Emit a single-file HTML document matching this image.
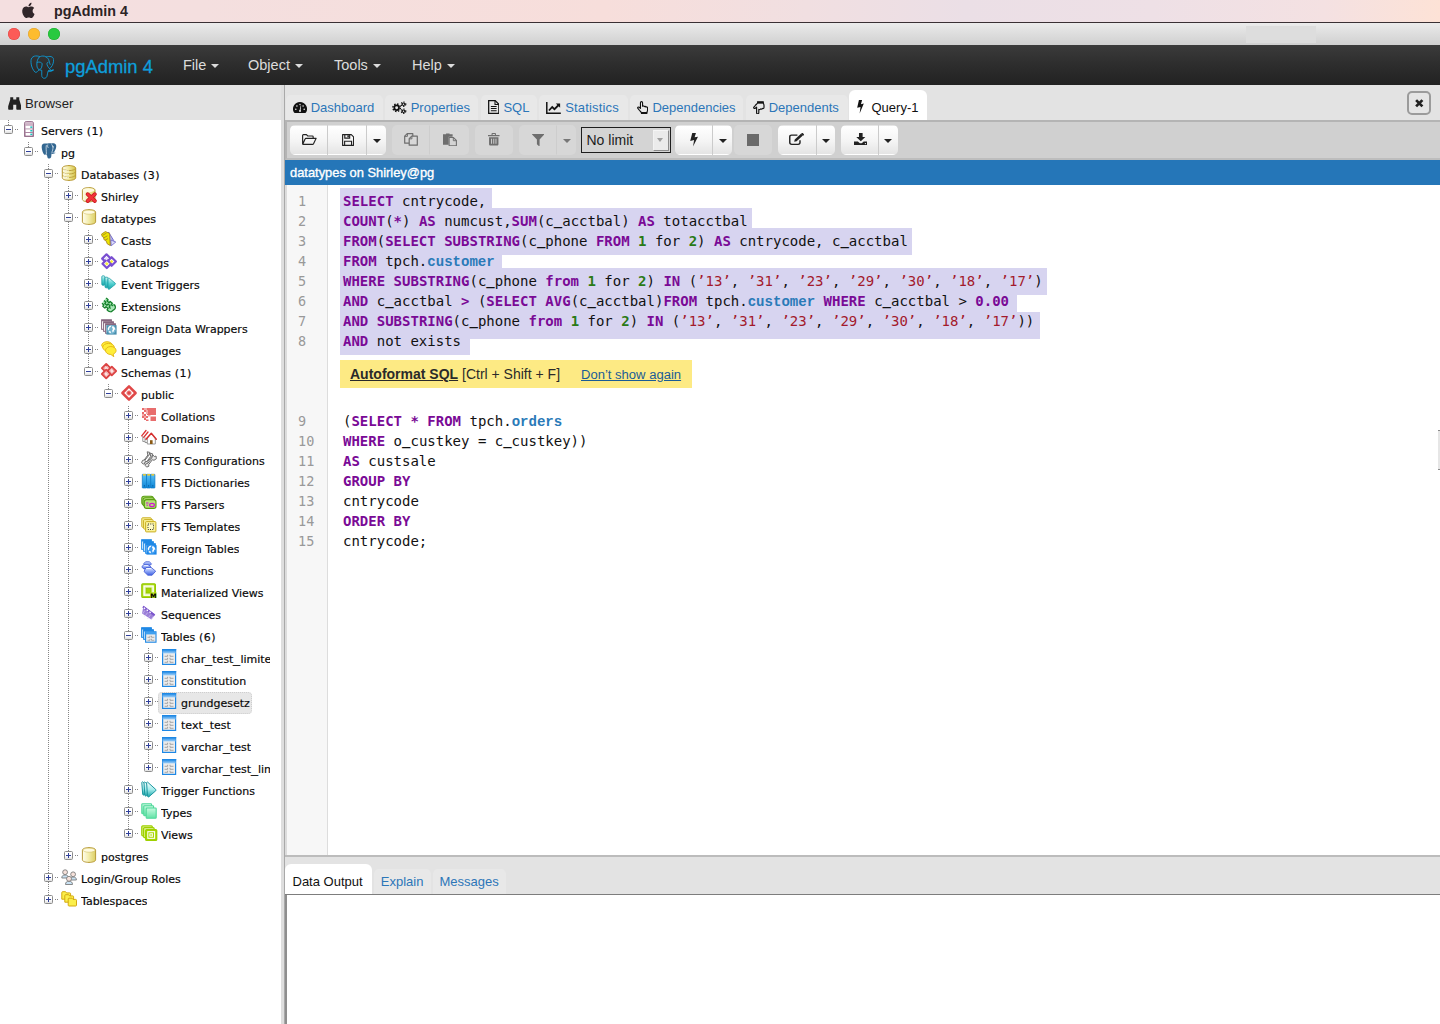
<!DOCTYPE html>
<html lang="en">
<head>
<meta charset="utf-8">
<title>pgAdmin 4</title>
<style>
*{box-sizing:border-box;margin:0;padding:0}
html,body{width:1440px;height:1024px;overflow:hidden;background:#fff}
body{position:relative;font-family:"Liberation Sans",sans-serif;font-size:13px;color:#222}
.abs{position:absolute}
/* ---------- macOS chrome ---------- */
#menubar{left:0;top:0;width:1440px;height:22px;background:linear-gradient(90deg,#f4dfe0 0%,#f4dfdf 14%,#f7dedb 42%,#f1dfe1 56%,#ebdfe6 67%,#eee0e6 80%,#f4e1e2 92%,#fde2d6 100%)}
#menubar .apple{left:21px;top:2px;width:14px;height:17px}
#menubar .app{left:54px;top:2px;font-weight:bold;font-size:14.3px;line-height:18px;color:#2b2326;letter-spacing:0}
#menuline{left:0;top:22px;width:1440px;height:1px;background:#3a3034}
#titlebar{left:0;top:23px;width:1440px;height:22px;background:linear-gradient(180deg,#ececec 0%,#e0e0e0 40%,#d0d0d0 100%)}
#titlebar i{position:absolute;top:5px;width:12px;height:12px;border-radius:50%}
#titlebar .ghost{left:1245.800px;top:3px;width:70.200px;height:17.300px;background:#dddddd}
/* ---------- navbar ---------- */
#navbar{left:0;top:45px;width:1440px;height:40px;background:linear-gradient(180deg,#3b3b3b 0%,#2d2d2d 50%,#222 100%)}
#navbar .brand{left:65px;top:11px;font-size:18.400px;line-height:22px;color:#0e9fdb;-webkit-text-stroke:.3px #0e9fdb;white-space:nowrap}
#navbar .mi{top:11px;font-size:14.500px;line-height:18px;color:#dcdcdc;white-space:nowrap}
#navbar .mi b{display:inline-block;width:0;height:0;border-left:4px solid transparent;border-right:4px solid transparent;border-top:4px solid #dcdcdc;margin-left:5px;vertical-align:2px}
/* ---------- panels ---------- */
#left-head{left:0;top:85px;width:281px;height:35px;background:#e3e3e3}
#left-head .t{left:25px;top:10px;font-size:13.200px;line-height:18px;color:#222}
#tree{left:0;top:120px;width:281px;height:904px;background:#fff;overflow:hidden}
#vsplit{left:281px;top:85px;width:4px;height:939px;background:#dedede}
#vline{left:284px;top:85px;width:1px;height:939px;background:#a9a9a9}
#right-head{left:285px;top:85px;width:1155px;height:35px;background:#e3e3e3}

/* ---------- tabs ---------- */
.tab{position:absolute;top:10px;height:25px;border-radius:5px 5px 0 0;background:#e8e8e8}
.tab.act{top:5px;height:30px;background:#fff;border-radius:6px 6px 0 0}
#right-head svg.ti{position:absolute}
#right-head .tt{position:absolute;top:15px;font-size:13px;line-height:16px;color:#2c76b8;white-space:nowrap}
#right-head .tt.act{color:#111}
#closebtn{left:1122.300px;top:6.300px;width:23.300px;height:23.400px;border:2px solid #9b9b9b;border-radius:5px;background:#e5e5e5}
/* ---------- toolbar ---------- */
#toolbar{left:285px;top:120px;width:1155px;height:40px;background:#d0d0d0;border-top:2px solid #b4b4b4;border-bottom:2px solid #bdbdbd;border-left:2px solid #b4b4b4}
.btn{position:absolute;top:3px;height:30px;background:linear-gradient(180deg,#fff 0%,#f4f4f4 55%,#e4e4e4 100%);border:1px solid transparent}
.btn.dis{background:#d7d7d7}
.btn.l{border-radius:5px 0 0 5px;border-right-color:#cbcbcb}
.btn.r{border-radius:0 5px 5px 0}
.btn.m{border-right-color:#cbcbcb}
.btn.s{border-radius:5px}
.btn.l.dis{border-right-color:#cdcdcd}
.btn svg{position:absolute}
.caret{position:absolute;left:50%;top:13px;margin-left:-4px;width:0;height:0;border-left:4px solid transparent;border-right:4px solid transparent;border-top:4px solid #222}
.dis .caret{border-top-color:#777}
#limit{left:294px;top:5px;width:90px;height:25.800px;border:1px solid #1e1e1e;background:#d4d4d4;font-size:14px;line-height:24px;padding-left:4.500px;color:#1c1c1c}
#limit i{position:absolute;right:1.300px;top:1.500px;width:16px;height:21.500px;border:1.500px solid;border-color:#f6f6f6 #8c8c8c #8c8c8c #f2f2f2;background:#ebebeb}
#limit i:after{content:"";position:absolute;left:3px;top:7.800px;border-left:3.800px solid transparent;border-right:3.800px solid transparent;border-top:4.200px solid #a0a0a0}
#bluebar{left:285px;top:160px;width:1155px;height:25px;background:#2576b8;color:#fff;font-size:12.900px;line-height:25px;padding-left:5px;-webkit-text-stroke:.35px #fff;white-space:nowrap}

/* ---------- tree ---------- */
#tree{font-family:"DejaVu Sans","Liberation Sans",sans-serif;font-size:11px;color:#0a0a0a;-webkit-text-stroke:.18px #0a0a0a}
#tree .clip{position:absolute;left:0;top:0;width:270px;height:904px;overflow:hidden}
#tree u.vl{position:absolute;width:1px;text-decoration:none;background:repeating-linear-gradient(180deg,#858585 0,#858585 1px,transparent 1px,transparent 2px)}
#tree u.hl{position:absolute;width:5px;height:1px;text-decoration:none;background:repeating-linear-gradient(90deg,transparent 0,transparent 1px,#858585 1px,#858585 2px)}
#tree b.tg{position:absolute;width:9px;height:9px;border:1px solid #8c8c8c;border-radius:1.500px;background:linear-gradient(180deg,#fff 0%,#fff 55%,#dedede 100%)}
#tree b.tg:before{content:"";position:absolute;left:1px;top:3px;width:5px;height:1px;background:#2f3f9a}
#tree b.tg.cl:after{content:"";position:absolute;left:3px;top:1px;width:1px;height:5px;background:#2f3f9a}
#tree svg.ic{position:absolute;width:16px;height:16px;overflow:visible}
#tree .lb{position:absolute;line-height:22px;height:22px;white-space:nowrap;letter-spacing:0;overflow:hidden}
#tree .lb s{text-decoration:none;display:inline-block;width:7px;transform:scaleX(1.270);transform-origin:0 50%}
#tree .lb em{font-style:normal;letter-spacing:.4px}
#tree i.sel{position:absolute;width:94px;height:22px;background:#e7e7e7;border:1px dotted #cecece;border-radius:4px}
/* ---------- editor ---------- */
#editor{left:285px;top:185px;width:1155px;height:670px;background:#fff;border-left:2px solid #dcdcdc;overflow:hidden}
#editor .gut{left:0;top:0;width:41px;height:670px;background:#f7f7f7;border-right:1px solid #ddd}
#editor .ln{left:11px;width:30px;height:20px;line-height:20px;font-family:"DejaVu Sans Mono","Liberation Mono",monospace;font-size:13.500px;color:#999}
#editor .cl{left:56px;height:20px;line-height:20px;font-family:"DejaVu Sans Mono","Liberation Mono",monospace;font-size:14px;color:#111;white-space:pre}
#editor .cl u{text-decoration:none;font-weight:bold;position:relative;top:-.6px}
#editor .cl b.k{color:#7a0a96;font-weight:bold}
#editor .cl b.n{color:#2a7a16;font-weight:bold}
#editor .cl i.s{color:#a31a2c;font-style:normal}
#editor .cl b.v{color:#2a7ab8;font-weight:bold;font-family:"Liberation Mono","DejaVu Sans Mono",monospace;font-size:14.050px}
#editor .selbg{left:53px;background:#d7d4f0}
#editor .hint{left:53px;top:175.300px;width:352px;height:27.500px;background:#fdea84;font-size:14px;line-height:28.500px;color:#2a2a2a;white-space:nowrap}
#editor .hint span{position:absolute;top:0}
#editor .hint .h1{left:10px;font-weight:bold;text-decoration:underline}
#editor .hint .h2{left:122px}
#editor .hint .h3{left:241px;top:.8px;color:#1a5c96;text-decoration:underline;font-size:13.050px}
/* ---------- bottom ---------- */
#hsplit{left:285px;top:855px;width:1155px;height:5px;background:#e3e3e3;border-top:2px solid #bcbcbc}
#bot-head{left:285px;top:860px;width:1155px;height:35.200px;background:#e3e3e3;border-bottom:1.400px solid #7d7d7d}
.btab{position:absolute;top:9px;height:25px;border-radius:5px 5px 0 0;background:#e8e8e8}
.btab.act{top:4.200px;height:29.800px;background:#fff;border-radius:6px 6px 0 0}
#bot-head .bt{position:absolute;top:14px;font-size:13px;line-height:16px;color:#2c76b8;white-space:nowrap}
#bot-head .bt.act{color:#111}
#bot-body{left:285px;top:895px;width:1155px;height:129px;background:#fff;border-left:2px solid #8e8e8e}
</style>
</head>
<body>
<!-- macOS menu bar -->
<div id="menubar" class="abs">
  <svg class="abs apple" viewBox="0 0 14 17"><path fill="#30262a" d="M11.6 9c0-1.9 1.6-2.8 1.6-2.9-.9-1.3-2.300-1.500-2.800-1.500-1.200-.1-2.300.7-2.900.7s-1.500-.7-2.500-.7C3.700 4.600 2.500 5.400 1.800 6.500.5 8.800 1.500 12.200 2.800 14.100c.6.900 1.400 1.900 2.400 1.900 1 0 1.300-.6 2.500-.6s1.500.6 2.500.6 1.700-.900 2.300-1.800c.7-1.100 1-2.100 1-2.200 0 0-1.900-.7-1.900-3zM9.700 3.200C10.200 2.600 10.600 1.700 10.500.8 9.700.8 8.800 1.300 8.300 1.900c-.5.600-.9 1.500-.8 2.300.9.100 1.700-.4 2.200-1z"/></svg>
  <div class="abs app">pgAdmin 4</div>
</div>
<div id="menuline" class="abs"></div>
<div id="titlebar" class="abs">
  <i style="left:8px;background:#fc5b57;box-shadow:inset 0 0 0 .5px #df4744"></i>
  <i style="left:28px;background:#fdbc2e;box-shadow:inset 0 0 0 .5px #de9f34"></i>
  <i style="left:48px;background:#28c93f;box-shadow:inset 0 0 0 .5px #1dad2b"></i>
  <div class="abs ghost"></div>
</div>
<!-- pgAdmin navbar -->
<div id="navbar" class="abs">
  <svg class="abs" style="left:29.700px;top:9.600px;width:24.700px;height:24.500px" viewBox="-.5 -.5 25 24.500" fill="none" stroke="#0c9bd6" stroke-width=".9" stroke-linecap="round" stroke-linejoin="round">
    <path d="M9.300 1C7.800.300 5.600.100 4 .500 1.800 1.200.600 2.800.500 5c-.1 3 .500 6 1.800 8.400.700 1.300 1.500 2.600 2.400 3.300.900.600 1.900-.100 2.500-.900.600-.700 1.300-1.300 1.800-1.800"/>
    <path d="M8.300 2.100C9.300 1 10.800.400 12.500.400c1.300 0 2.500.300 3.500 1 1.500 1 2.500 2.300 2.800 4 .300 1.300.700 2.400 1.100 3.500"/>
    <path d="M8.300 2.100C7.300 3.700 6.600 5.500 6.500 7.400c-.1 1.500-.1 2.900.2 4.200.300 1.300 1.100 2.300 2.300 2.800.800.300 1.600.400 2.400.400v5.200c0 1.800 1.100 2.900 2.500 2.900 1.500 0 2.500-.900 2.800-2.100.400-1.500.500-3.300 1.100-4.900.200-.500.400-.700.700-.800"/>
    <path d="M6.900 6.700c1-.300 2.200-.300 3.100 0 1.100.400 1.800 1 1.800 1.700 0 1.300-.300 2.700-.700 3.900-.300.800-.800 1.300-1.400 1.700"/>
    <path d="M16 1.400c1.500-.600 3.300-.800 4.900-.400 1.500.400 2.400 1.500 2.500 2.900.1 1.600-.200 3.100-.700 4.500-.400 1.200-1 2.300-1.800 3.200-.500.700-1.100 1.300-1.700 1.800"/>
    <path d="M17.800 6.700c-.600.100-1.100.500-1.100 1.100-.1.500 0 .9.100 1.300.300 1.200 1 2.300 1.700 3.200.500.600 1.100 1.200 1.700 1.700"/>
    <path d="M18.500 15.500c.900.200 1.800.100 2.600-.200.700-.200 1.400-.500 1.900-.900" stroke-width="1.400"/>
  </svg>
  <div class="abs brand">pgAdmin 4</div>
  <div class="abs mi" style="left:183px">File<b></b></div>
  <div class="abs mi" style="left:248px">Object<b></b></div>
  <div class="abs mi" style="left:334px">Tools<b></b></div>
  <div class="abs mi" style="left:412px">Help<b></b></div>
</div>
<!-- browser panel -->
<div id="left-head" class="abs">
  <svg class="abs" style="left:7.500px;top:12px;width:13.500px;height:13px" viewBox="0 0 15 14"><path fill="#222" d="M2.500 0h3.300v2.500h3.400V0h3.300v2.500l2.300 7.500v3.200c0 .4-.3.800-.8.800h-4c-.4 0-.8-.4-.8-.8V8.500H5.800v4.700c0 .4-.4.800-.8.800H1c-.5 0-.8-.4-.8-.8V10L2.500 2.500z"/></svg>
  <div class="abs t">Browser</div>
</div>
<div id="tree" class="abs"><svg width="0" height="0" style="position:absolute"><defs><linearGradient id="gsv" x1="0" y1="0" x2="0" y2="1"><stop offset="0" stop-color="#d9c2d2"/><stop offset="1" stop-color="#9c7190"/></linearGradient><linearGradient id="gdb" x1="0" y1="0" x2="1" y2="0"><stop offset="0" stop-color="#fffdf0"/><stop offset=".5" stop-color="#f2e99a"/><stop offset="1" stop-color="#d3c24a"/></linearGradient><linearGradient id="gcy" x1="0" y1="0" x2="1" y2="0"><stop offset="0" stop-color="#fffdf0"/><stop offset=".45" stop-color="#f4eeb0"/><stop offset="1" stop-color="#dccf63"/></linearGradient><linearGradient id="gev" x1="0" y1="0" x2="0" y2="1"><stop offset="0" stop-color="#d8f7f7"/><stop offset=".5" stop-color="#52d0d0"/><stop offset="1" stop-color="#17a5a8"/></linearGradient><linearGradient id="gbk" x1="0" y1="0" x2="0" y2="1"><stop offset="0" stop-color="#5cc1f5"/><stop offset="1" stop-color="#0b86d8"/></linearGradient><linearGradient id="gfn" x1="0" y1="0" x2="0" y2="1"><stop offset="0" stop-color="#e6ecff"/><stop offset=".5" stop-color="#8ea6f6"/><stop offset="1" stop-color="#3f5fe0"/></linearGradient><linearGradient id="gtb" x1="0" y1="0" x2="0" y2="1"><stop offset="0" stop-color="#1e88e5"/><stop offset="1" stop-color="#9fd0f8"/></linearGradient><linearGradient id="gtf" x1="0" y1="0" x2="0" y2="1"><stop offset="0" stop-color="#fff"/><stop offset=".5" stop-color="#a5ecec"/><stop offset="1" stop-color="#18a3a8"/></linearGradient><linearGradient id="gty" x1="0" y1="0" x2="0" y2="1"><stop offset="0" stop-color="#c8fae0"/><stop offset="1" stop-color="#62e2a6"/></linearGradient></defs></svg>
<u class="vl" style="left:8px;top:0px;height:5px"></u><u class="hl" style="left:14px;top:9px"></u><b class="tg op" style="left:4px;top:5px"></b><svg class="ic" style="left:21px;top:1px" viewBox="0 0 16 16"><path d="M3.500 2.200C3.500 1.200 4.300.500 5.200.500h5.600c.900 0 1.700.700 1.700 1.700V15.500h-9z" fill="url(#gsv)" stroke="#8a5f7f" stroke-width=".8"/><g fill="#fff"><rect x="4.600" y="4.800" width="6.800" height="2.600"/><rect x="4.600" y="8.400" width="6.800" height="2.600"/><rect x="4.600" y="12" width="6.800" height="2.600"/></g><g fill="#19c3c0"><rect x="9.300" y="5.400" width="2" height="1.500"/><rect x="9.300" y="9" width="2" height="1.500"/><rect x="9.300" y="12.600" width="2" height="1.500"/></g></svg><span class="lb" style="left:41px;top:1px;max-width:229px">Servers<em> (1)</em></span>
<u class="vl" style="left:28px;top:22px;height:5px"></u><u class="hl" style="left:34px;top:31px"></u><b class="tg op" style="left:24px;top:27px"></b><svg class="ic" style="left:41px;top:23px" viewBox="0 0 16 16"><path fill="#336791" d="M3.700.600C1.700.500.500 2 .700 4.400c.2 2.600 1.200 5.600 2.400 7 .700.800 1.700.500 2.100-.300.100.900.500 1.400 1 1.600 0 1.300.300 2.600 1.600 2.800 1.700.300 2.400-.900 2.500-2.500l.200-2.300c.700.300 1.500.300 2.300.100.900-.200 1.700-.700 1.500-1-.200-.400-.900-.050-1.600-.100 1.700-2 3.100-5.800 2.400-7.600C14.400.300 12.200-.100 10.400.600 9.300.100 7.900.100 6.800.600 5.900.400 4.700.600 3.700.600z"/><path fill="none" stroke="#e3ebf3" stroke-width=".75" stroke-linecap="round" d="M5.300 2.500c-.500 2.300.100 5 .100 8.300M6.700 1.900c-.300 1-.200 1.900.400 2.700M10.800 1.600c1.100 1.500 1.400 3.700.900 5.500-.300 1-.900 1.800-.800 2.900M11.900 3c.500.200.800.600.700 1.100M12.700 9.900c.600.100 1.300.050 1.800-.200"/></svg><span class="lb" style="left:61px;top:23px;max-width:209px">pg</span>
<u class="vl" style="left:48px;top:44px;height:5px"></u><u class="vl" style="left:48px;top:58px;height:8px"></u><u class="hl" style="left:54px;top:53px"></u><b class="tg op" style="left:44px;top:49px"></b><svg class="ic" style="left:61px;top:45px" viewBox="0 0 16 16"><path d="M1.300 3.200C1.300 1.700 4.300.600 8 .600s6.700 1.100 6.700 2.600v9.600c0 1.500-3 2.600-6.700 2.600s-6.700-1.100-6.700-2.600z" fill="url(#gdb)" stroke="#b6952c" stroke-width="1"/><path d="M1.500 3.400c.5 1.300 3.300 2.200 6.500 2.200s6-.9 6.500-2.200M1.500 6.800c.5 1.300 3.300 2.200 6.500 2.200s6-.9 6.500-2.200M1.500 10.200c.5 1.300 3.300 2.200 6.500 2.200s6-.9 6.500-2.200" fill="none" stroke="#b89c35" stroke-width=".9"/><path d="M2.500 4.600c1 .9 3.200 1.400 5.500 1.400M2.500 8c1 .9 3.200 1.400 5.500 1.400M2.500 11.400c1 .9 3.200 1.400 5.500 1.400" fill="none" stroke="#fffef2" stroke-width=".9"/></svg><span class="lb" style="left:81px;top:45px;max-width:189px">Databases<em> (3)</em></span>
<u class="vl" style="left:48px;top:66px;height:22px"></u><u class="vl" style="left:68px;top:66px;height:5px"></u><u class="vl" style="left:68px;top:80px;height:8px"></u><u class="hl" style="left:74px;top:75px"></u><b class="tg cl" style="left:64px;top:71px"></b><svg class="ic" style="left:81px;top:67px" viewBox="0 0 16 16"><path d="M1.400 3.100C1.400 1.700 4.200.600 7.700.600S14 1.700 14 3.100v9.300c0 1.400-2.800 2.500-6.300 2.500s-6.300-1.100-6.300-2.500z" fill="url(#gcy)" stroke="#b89a3a" stroke-width="1"/><ellipse cx="7.700" cy="3.200" rx="5.700" ry="2" fill="#fffbe0"/><path d="M6.600 7.200l7.300 6.800M13.900 7.200L6.600 14" stroke="#c4141b" stroke-width="3.800" stroke-linecap="round"/><path d="M6.600 7.200l7.300 6.800M13.900 7.200L6.600 14" stroke="#f3333a" stroke-width="2.400" stroke-linecap="round"/></svg><span class="lb" style="left:101px;top:67px;max-width:169px">Shirley</span>
<u class="vl" style="left:48px;top:88px;height:22px"></u><u class="vl" style="left:68px;top:88px;height:5px"></u><u class="vl" style="left:68px;top:102px;height:8px"></u><u class="hl" style="left:74px;top:97px"></u><b class="tg op" style="left:64px;top:93px"></b><svg class="ic" style="left:81px;top:89px" viewBox="0 0 16 16"><path d="M1.400 3.100C1.400 1.700 4.300.600 8 .600s6.600 1.100 6.600 2.500v9.800c0 1.400-2.900 2.500-6.600 2.500s-6.600-1.100-6.600-2.500z" fill="url(#gcy)" stroke="#b89a3a" stroke-width="1"/><ellipse cx="8" cy="3.200" rx="6" ry="2" fill="#fffbe0" stroke="#cdb95e" stroke-width=".5"/></svg><span class="lb" style="left:101px;top:89px;max-width:169px">datatypes</span>
<u class="vl" style="left:48px;top:110px;height:22px"></u><u class="vl" style="left:68px;top:110px;height:22px"></u><u class="vl" style="left:88px;top:110px;height:5px"></u><u class="vl" style="left:88px;top:124px;height:8px"></u><u class="hl" style="left:94px;top:119px"></u><b class="tg cl" style="left:84px;top:115px"></b><svg class="ic" style="left:101px;top:111px" viewBox="0 0 16 16"><path d="M7.500 1l5.200 8.500-3.200 5z" fill="#b4b4f2" stroke="#6a62c8" stroke-width=".9" stroke-linejoin="round"/><path d="M9.800 9l5 2-4.600 3.800z" fill="#dadafa" stroke="#6a62c8" stroke-width=".8" stroke-linejoin="round"/><path d="M.6 3L4.400.6l4.200 1.800.6 12-2.800-1.400-1.500-3.500-1.800-.7-.7-2.700-1.300-.6z" fill="#ece500" stroke="#a98a22" stroke-width=".9" stroke-linejoin="round"/><path d="M1.600 4.300l3.900-2.200M2.900 6.800l3.600-2M4 9.200l3-1.600" stroke="#a98a22" stroke-width=".9"/></svg><span class="lb" style="left:121px;top:111px;max-width:149px">Casts</span>
<u class="vl" style="left:48px;top:132px;height:22px"></u><u class="vl" style="left:68px;top:132px;height:22px"></u><u class="vl" style="left:88px;top:132px;height:5px"></u><u class="vl" style="left:88px;top:146px;height:8px"></u><u class="hl" style="left:94px;top:141px"></u><b class="tg cl" style="left:84px;top:137px"></b><svg class="ic" style="left:101px;top:133px" viewBox="0 0 16 16"><g stroke="#7a4fd1" stroke-width="2.200" fill="#fff" stroke-linejoin="round"><path d="M5.500 1.300l4.300 4.300-4.300 4.300L1.200 5.600z"/><path d="M10.600 4.200l4.300 4.300-4.300 4.300-4.300-4.300z"/><path d="M5.800 7.200l4.300 4.300-4.300 4.300-4.300-4.300z" transform="translate(0,-.8)"/></g><g fill="#f4ee3a"><path d="M10.600 6.700l1.800 1.800-1.800 1.800-1.800-1.800z"/><path d="M5.800 8.900l1.800 1.800-1.800 1.800L4 10.700z"/></g><path d="M5.500 3.800l1.800 1.800-1.800 1.800-1.800-1.800z" fill="#e9e1fb"/></svg><span class="lb" style="left:121px;top:133px;max-width:149px">Catalogs</span>
<u class="vl" style="left:48px;top:154px;height:22px"></u><u class="vl" style="left:68px;top:154px;height:22px"></u><u class="vl" style="left:88px;top:154px;height:5px"></u><u class="vl" style="left:88px;top:168px;height:8px"></u><u class="hl" style="left:94px;top:163px"></u><b class="tg cl" style="left:84px;top:159px"></b><svg class="ic" style="left:101px;top:155px" viewBox="0 0 16 16"><g fill="url(#gev)" stroke="#1b9fa6" stroke-width=".8" stroke-linejoin="round"><rect x=".8" y=".8" width="3" height="9.500" rx="1"/><rect x="4" y="2.200" width="3" height="10.600" rx="1"/><path d="M7 4.200c0-1 .8-1.300 1.500-.8l5.600 4.700c.5.400.5 1 0 1.400l-5.600 4.600c-.7.500-1.500.2-1.500-.8z"/></g></svg><span class="lb" style="left:121px;top:155px;max-width:149px">Event Triggers</span>
<u class="vl" style="left:48px;top:176px;height:22px"></u><u class="vl" style="left:68px;top:176px;height:22px"></u><u class="vl" style="left:88px;top:176px;height:5px"></u><u class="vl" style="left:88px;top:190px;height:8px"></u><u class="hl" style="left:94px;top:185px"></u><b class="tg cl" style="left:84px;top:181px"></b><svg class="ic" style="left:101px;top:177px" viewBox="0 0 16 16"><path d="M5 .8l9.800 8.200-4.800 6.200L.8 6.500z" fill="#a9e6b6"/><g fill="none" stroke="#14802a" stroke-width="1.300" stroke-linejoin="round"><path d="M5.200 1l1.900 1.700-1.100 1.300 2.100 1.800 1.100-1.300 2.100 1.800-1.100 1.300 1.600 1.400"/><path d="M3 3.500l1.900 1.700-1.100 1.300 2.100 1.800 1.100-1.300 2.100 1.800-1.100 1.300 1.600 1.400"/><path d="M1 6.200l1.900 1.700-1.100 1.300L3.900 11l1.100-1.300 2.100 1.800L6 12.800l1.600 1.400 2.300.8"/><path d="M12.500 7.500c2.300.6 2.700 4.200.2 5.300l-2.700 2.200"/></g></svg><span class="lb" style="left:121px;top:177px;max-width:149px">Extensions</span>
<u class="vl" style="left:48px;top:198px;height:22px"></u><u class="vl" style="left:68px;top:198px;height:22px"></u><u class="vl" style="left:88px;top:198px;height:5px"></u><u class="vl" style="left:88px;top:212px;height:8px"></u><u class="hl" style="left:94px;top:207px"></u><b class="tg cl" style="left:84px;top:203px"></b><svg class="ic" style="left:101px;top:199px" viewBox="0 0 16 16"><g fill="#fff" stroke="#86667f" stroke-width="1"><rect x=".6" y=".8" width="9.800" height="9.500"/><rect x="2.600" y="2.800" width="9.800" height="9.500"/><rect x="4.600" y="4.800" width="9.800" height="9.500"/></g><path d="M.6 1.500h9.800M2.600 3.500h9.800M4.600 5.500h9.800" stroke="#86667f" stroke-width="1.600"/><rect x="5.400" y="6.200" width="10.200" height="9.400" fill="#4a8fae"/><circle cx="10.500" cy="10.600" r="4.400" fill="#74b4d0"/><path d="M6.800 9.300c.5-1.900 2-2.900 3.600-2.900l-.6 1.500-1.400.8-.3 1.800-1 1zM11.500 6.900c1.600.5 2.700 1.900 2.800 3.700l-1.100.2-.5 1.800-1.200.9-.3-2.100.8-1.400-1-1.300zM8.700 11.900l1 .5.200 1.800c-.9-.1-1.800-.6-2.300-1.400z" fill="#fff"/></svg><span class="lb" style="left:121px;top:199px;max-width:149px">Foreign Data Wrappers</span>
<u class="vl" style="left:48px;top:220px;height:22px"></u><u class="vl" style="left:68px;top:220px;height:22px"></u><u class="vl" style="left:88px;top:220px;height:5px"></u><u class="vl" style="left:88px;top:234px;height:8px"></u><u class="hl" style="left:94px;top:229px"></u><b class="tg cl" style="left:84px;top:225px"></b><svg class="ic" style="left:101px;top:221px" viewBox="0 0 16 16"><g fill="#ffee38" stroke="#e2b315" stroke-width=".9"><ellipse cx="6" cy="4.200" rx="5.300" ry="3.500"/><ellipse cx="7.500" cy="6.300" rx="5.800" ry="3.900"/><path d="M9.800 5.500c3 0 5.300 1.800 5.300 4 0 1.600-1.200 2.900-2.900 3.600l.6 2.600-2.900-2.200C6.800 13.500 4.500 11.700 4.500 9.500c0-2.200 2.300-4 5.300-4z"/></g></svg><span class="lb" style="left:121px;top:221px;max-width:149px">Languages</span>
<u class="vl" style="left:48px;top:242px;height:22px"></u><u class="vl" style="left:68px;top:242px;height:22px"></u><u class="vl" style="left:88px;top:242px;height:5px"></u><u class="hl" style="left:94px;top:251px"></u><b class="tg op" style="left:84px;top:247px"></b><svg class="ic" style="left:101px;top:243px" viewBox="0 0 16 16"><g fill="#fbe3e3" stroke="#dc4444" stroke-width="1.900" stroke-linejoin="round"><path d="M5.200 0.900l4.300 4.300-4.300 4.300L.9 5.200z"/><path d="M10.800 3.700l4.300 4.300-4.300 4.300L6.500 8z"/><path d="M5.200 6.700l4.300 4.300-4.300 4.300L.9 11z"/></g><g fill="none" stroke="#e87272" stroke-width=".9" stroke-dasharray="1 1"><path d="M5.200 3l2.200 2.200-2.200 2.200L3 5.200z"/><path d="M10.800 5.800L13 8l-2.200 2.200L8.600 8z"/><path d="M5.200 8.800l2.200 2.200-2.200 2.200L3 11z"/></g></svg><span class="lb" style="left:121px;top:243px;max-width:149px">Schemas<em> (1)</em></span>
<u class="vl" style="left:48px;top:264px;height:22px"></u><u class="vl" style="left:68px;top:264px;height:22px"></u><u class="vl" style="left:108px;top:264px;height:5px"></u><u class="hl" style="left:114px;top:273px"></u><b class="tg op" style="left:104px;top:269px"></b><svg class="ic" style="left:121px;top:265px" viewBox="0 0 16 16"><path d="M8 1.400l6.600 6.600L8 14.600 1.400 8z" fill="#fff" stroke="#e04848" stroke-width="2.500" stroke-linejoin="round"/><circle cx="8" cy="8" r="2.300" fill="#e04848" stroke="#f3a5a5" stroke-width=".9"/></svg><span class="lb" style="left:141px;top:265px;max-width:129px">public</span>
<u class="vl" style="left:48px;top:286px;height:22px"></u><u class="vl" style="left:68px;top:286px;height:22px"></u><u class="vl" style="left:128px;top:286px;height:5px"></u><u class="vl" style="left:128px;top:300px;height:8px"></u><u class="hl" style="left:134px;top:295px"></u><b class="tg cl" style="left:124px;top:291px"></b><svg class="ic" style="left:141px;top:287px" viewBox="0 0 16 16"><g fill="#e86d6d"><rect x="6" y="1" width="9" height="7"/><rect x="9.500" y="9.500" width="5.500" height="4.500"/><rect x="1" y="1" width="2" height="2"/><rect x="3" y="3" width="2" height="2"/><rect x="1" y="5" width="2" height="2"/><rect x="3" y="7" width="2" height="2"/><rect x="5" y="9" width="2" height="2"/><rect x="1" y="9" width="2" height="2"/><rect x="3" y="11" width="2" height="2"/><rect x="5" y="12.500" width="2.500" height="1.500"/></g><g fill="#f3a9a9"><rect x="3" y="1" width="3" height="2"/><rect x="5" y="3" width="2" height="2"/><rect x="5" y="5" width="2" height="2"/><rect x="7" y="8" width="2.500" height="1.500"/><rect x="1" y="7" width="2" height="2"/><rect x="3" y="9" width="2" height="2"/></g></svg><span class="lb" style="left:161px;top:287px;max-width:109px">Collations</span>
<u class="vl" style="left:48px;top:308px;height:22px"></u><u class="vl" style="left:68px;top:308px;height:22px"></u><u class="vl" style="left:128px;top:308px;height:5px"></u><u class="vl" style="left:128px;top:322px;height:8px"></u><u class="hl" style="left:134px;top:317px"></u><b class="tg cl" style="left:124px;top:313px"></b><svg class="ic" style="left:141px;top:309px" viewBox="0 0 16 16"><path d="M1.800 7v5.500h2M4 8.500v5h2" fill="#fff" stroke="#8c8c8c" stroke-width=".9"/><path d="M.7 6.800L5 1.500M2.700 8.300L7 3" stroke="#d33" stroke-width="1.300" stroke-linecap="round"/><path d="M6.300 9v6h8V9L10.300 4.500z" fill="#fff" stroke="#8c8c8c" stroke-width=".9"/><path d="M5 10.200l5.300-6 5 6" fill="none" stroke="#d62f2f" stroke-width="1.500" stroke-linecap="round" stroke-linejoin="round"/><rect x="9" y="11.200" width="2.600" height="3.800" fill="#8b5a14"/></svg><span class="lb" style="left:161px;top:309px;max-width:109px">Domains</span>
<u class="vl" style="left:48px;top:330px;height:22px"></u><u class="vl" style="left:68px;top:330px;height:22px"></u><u class="vl" style="left:128px;top:330px;height:5px"></u><u class="vl" style="left:128px;top:344px;height:8px"></u><u class="hl" style="left:134px;top:339px"></u><b class="tg cl" style="left:124px;top:335px"></b><svg class="ic" style="left:141px;top:331px" viewBox="0 0 16 16"><g fill="#e9e9e9" stroke="#6f6f6f" stroke-width="1" stroke-linejoin="round"><path d="M6.200.8l2.600.6-.6 2.500-4.300 5.300.7 1.700-2 2.300-2-1.500.9-2.300 1.700-.4 3.700-5z"/><path d="M9 2.200l2.600.6-.6 2.500-4.300 5.300.7 1.700-2 2.300-2-1.500.9-2.300L6 10.400l3.700-5z"/><path d="M11.800 3.800l1.500 1.800 1.700-.6.400 2.700-2.400 1.600-1.600-.6-3.800 5 .4 1.400-2.300 1-1.500-1.600 1.100-2.100 1.600-.1 3.800-5z"/></g></svg><span class="lb" style="left:161px;top:331px;max-width:109px">FTS Configurations</span>
<u class="vl" style="left:48px;top:352px;height:22px"></u><u class="vl" style="left:68px;top:352px;height:22px"></u><u class="vl" style="left:128px;top:352px;height:5px"></u><u class="vl" style="left:128px;top:366px;height:8px"></u><u class="hl" style="left:134px;top:361px"></u><b class="tg cl" style="left:124px;top:357px"></b><svg class="ic" style="left:141px;top:353px" viewBox="0 0 16 16"><g fill="url(#gbk)" stroke="#0a78c4" stroke-width=".7"><rect x="1.300" y="1.300" width="4.200" height="13.700" rx=".5"/><rect x="5.500" y="1.300" width="4.200" height="13.700" rx=".5"/><rect x="9.700" y="1.300" width="4.200" height="13.700" rx=".5"/></g><g fill="#e8c83a"><rect x="2" y="1" width="2.800" height="1.600"/><rect x="6.200" y="1" width="2.800" height="1.600"/><rect x="10.400" y="1" width="2.800" height="1.600"/></g><g fill="#064f8a"><circle cx="3.400" cy="12.800" r=".6"/><circle cx="7.600" cy="12.800" r=".6"/><circle cx="11.800" cy="12.800" r=".6"/></g></svg><span class="lb" style="left:161px;top:353px;max-width:109px">FTS Dictionaries</span>
<u class="vl" style="left:48px;top:374px;height:22px"></u><u class="vl" style="left:68px;top:374px;height:22px"></u><u class="vl" style="left:128px;top:374px;height:5px"></u><u class="vl" style="left:128px;top:388px;height:8px"></u><u class="hl" style="left:134px;top:383px"></u><b class="tg cl" style="left:124px;top:379px"></b><svg class="ic" style="left:141px;top:375px" viewBox="0 0 16 16"><g fill="#b8e27a" stroke="#5a9e12" stroke-width="1.100"><rect x=".8" y="1.200" width="11.500" height="8.500" rx="2.200"/><rect x="2" y="2.800" width="11.500" height="8.500" rx="2.200"/><rect x="3.300" y="4.600" width="11.700" height="8.800" rx="2.200"/></g><path d="M5 8h2.500M5.500 10.200h1.500" stroke="#d018d0" stroke-width="1"/><ellipse cx="11" cy="10" rx="2.400" ry="1.700" fill="none" stroke="#d018d0" stroke-width="1.200"/></svg><span class="lb" style="left:161px;top:375px;max-width:109px">FTS Parsers</span>
<u class="vl" style="left:48px;top:396px;height:22px"></u><u class="vl" style="left:68px;top:396px;height:22px"></u><u class="vl" style="left:128px;top:396px;height:5px"></u><u class="vl" style="left:128px;top:410px;height:8px"></u><u class="hl" style="left:134px;top:405px"></u><b class="tg cl" style="left:124px;top:401px"></b><svg class="ic" style="left:141px;top:397px" viewBox="0 0 16 16"><g fill="#fbf39a" stroke="#c9ae22" stroke-width="1"><rect x=".8" y=".8" width="9.500" height="9.500" rx=".8"/><rect x="2.600" y="2.600" width="9.500" height="9.500" rx=".8"/><rect x="4.600" y="4.600" width="10.300" height="10.300" rx=".8"/></g><rect x="7" y="7" width="5.500" height="5.500" fill="#fdfac8" stroke="#333" stroke-width="1" stroke-dasharray="1 1.250"/></svg><span class="lb" style="left:161px;top:397px;max-width:109px">FTS Templates</span>
<u class="vl" style="left:48px;top:418px;height:22px"></u><u class="vl" style="left:68px;top:418px;height:22px"></u><u class="vl" style="left:128px;top:418px;height:5px"></u><u class="vl" style="left:128px;top:432px;height:8px"></u><u class="hl" style="left:134px;top:427px"></u><b class="tg cl" style="left:124px;top:423px"></b><svg class="ic" style="left:141px;top:419px" viewBox="0 0 16 16"><g fill="#d9eefe" stroke="#2a8fe8" stroke-width="1"><rect x=".6" y=".8" width="9.800" height="9.500"/><rect x="2.600" y="2.800" width="9.800" height="9.500"/><rect x="4.600" y="4.800" width="9.800" height="9.500"/></g><path d="M.6 1.500h9.800M2.600 3.500h9.800M4.600 5.500h9.800" stroke="#1e88e5" stroke-width="1.800"/><rect x="5.400" y="6.200" width="10.200" height="9.400" fill="#1c86e8"/><circle cx="10.500" cy="10.600" r="4.400" fill="#3d9bf0"/><path d="M6.800 9.300c.5-1.900 2-2.900 3.600-2.900l-.6 1.500-1.400.8-.3 1.800-1 1zM11.500 6.900c1.600.5 2.700 1.900 2.800 3.700l-1.100.2-.5 1.800-1.200.9-.3-2.100.8-1.400-1-1.300zM8.700 11.900l1 .5.200 1.800c-.9-.1-1.800-.6-2.300-1.400z" fill="#fff"/></svg><span class="lb" style="left:161px;top:419px;max-width:109px">Foreign Tables</span>
<u class="vl" style="left:48px;top:440px;height:22px"></u><u class="vl" style="left:68px;top:440px;height:22px"></u><u class="vl" style="left:128px;top:440px;height:5px"></u><u class="vl" style="left:128px;top:454px;height:8px"></u><u class="hl" style="left:134px;top:449px"></u><b class="tg cl" style="left:124px;top:445px"></b><svg class="ic" style="left:141px;top:441px" viewBox="0 0 16 16"><g fill="url(#gfn)" stroke="#4a63d8" stroke-width=".9" stroke-linejoin="round"><path d="M4.500.8h3.800l2.200 2-1.500 1.700H4.300L2.600 2.800z"/><path d="M2.500 3.700h4.800l2.800 2.400-1.700 1.900H2.800L.8 6z"/><path d="M5 6.500h5.200l4.500 3.700-3.600 4H6.800L3 10.500z"/></g><path d="M5.500 7.500h4.300M3.200 4.600h3.800" stroke="#fff" stroke-width=".8"/></svg><span class="lb" style="left:161px;top:441px;max-width:109px">Functions</span>
<u class="vl" style="left:48px;top:462px;height:22px"></u><u class="vl" style="left:68px;top:462px;height:22px"></u><u class="vl" style="left:128px;top:462px;height:5px"></u><u class="vl" style="left:128px;top:476px;height:8px"></u><u class="hl" style="left:134px;top:471px"></u><b class="tg cl" style="left:124px;top:467px"></b><svg class="ic" style="left:141px;top:463px" viewBox="0 0 16 16"><rect x=".8" y=".8" width="13.600" height="13.600" rx="1" fill="#b4de1c" stroke="#93c900" stroke-width="1.200"/><rect x="3" y="3" width="9.200" height="9.200" fill="#dff29a" stroke="#fff" stroke-width="1.300"/><rect x="5.200" y="5.200" width="4.800" height="4.800" fill="#a6d800" stroke="#8fc400" stroke-width=".8"/><rect x="9" y="9.300" width="6.500" height="5.600" fill="#b4de1c"/><text x="9.200" y="14.900" font-family="'DejaVu Sans',sans-serif" font-weight="bold" font-size="6.300" fill="#000">M</text></svg><span class="lb" style="left:161px;top:463px;max-width:109px">Materialized Views</span>
<u class="vl" style="left:48px;top:484px;height:22px"></u><u class="vl" style="left:68px;top:484px;height:22px"></u><u class="vl" style="left:128px;top:484px;height:5px"></u><u class="vl" style="left:128px;top:498px;height:8px"></u><u class="hl" style="left:134px;top:493px"></u><b class="tg cl" style="left:124px;top:489px"></b><svg class="ic" style="left:141px;top:485px" viewBox="0 0 16 16"><g stroke-linejoin="round"><path d="M2.500.8l11.700 8.700-3.800 5L1 8.500z" fill="#9b7fd8"/><path d="M2.500.8l11.700 8.700-1.200 1.600L1.300 2.400z" fill="#7b55cc"/><path d="M3.200 2.200l1.300 1-.8 1-1.300-1zM6 4.200l1.300 1-.8 1-1.300-1zM8.800 6.300l1.300 1-.8 1-1.300-1z" fill="#fff"/><path d="M3.800 5.500l-2 3.300M6.700 7.500L3.800 11.300M9.600 9.600l-2.800 4M12.300 11.500l-2 2.800" stroke="#c9b9ee" stroke-width=".8"/></g></svg><span class="lb" style="left:161px;top:485px;max-width:109px">Sequences</span>
<u class="vl" style="left:48px;top:506px;height:22px"></u><u class="vl" style="left:68px;top:506px;height:22px"></u><u class="vl" style="left:128px;top:506px;height:5px"></u><u class="vl" style="left:128px;top:520px;height:8px"></u><u class="hl" style="left:134px;top:515px"></u><b class="tg op" style="left:124px;top:511px"></b><svg class="ic" style="left:141px;top:507px" viewBox="0 0 16 16"><g fill="#bfe2fb" stroke="#1e88e5" stroke-width="1"><rect x=".6" y=".8" width="9.800" height="9.500"/><rect x="2.600" y="2.800" width="9.800" height="9.500"/></g><path d="M.6 1.500h9.800M2.600 3.500h9.800" stroke="#1e88e5" stroke-width="1.800"/><rect x="4.600" y="4.800" width="10.400" height="10.400" fill="#ececec" stroke="#1e88e5" stroke-width="1.100"/><rect x="4.600" y="4.800" width="10.400" height="2.600" fill="#3fa0f0"/><path d="M6.500 10.300h2.500v-1.500M10.500 8.800v1.500h2.800M6.500 13.300h2.500v-1.500M10.500 11.800v1.500h2.800" fill="none" stroke="#9a9a9a" stroke-width=".8"/></svg><span class="lb" style="left:161px;top:507px;max-width:109px">Tables<em> (6)</em></span>
<u class="vl" style="left:48px;top:528px;height:22px"></u><u class="vl" style="left:68px;top:528px;height:22px"></u><u class="vl" style="left:128px;top:528px;height:22px"></u><u class="vl" style="left:148px;top:528px;height:5px"></u><u class="vl" style="left:148px;top:542px;height:8px"></u><u class="hl" style="left:154px;top:537px"></u><b class="tg cl" style="left:144px;top:533px"></b><svg class="ic" style="left:161px;top:529px" viewBox="0 0 16 16"><rect x="1.600" y=".600" width="13" height="14.800" fill="#ececec" stroke="#1e88e5" stroke-width="1.200"/><rect x="1.600" y=".600" width="13" height="3.800" fill="url(#gtb)"/><path d="M1 .6h14.200" stroke="#1e88e5" stroke-width="1.200"/><path d="M3.600 7.300h3v-1.500M9 5.800v1.500h3.500M3.600 10.300h3v-1.500M9 8.800v1.500h3.500M3.600 13.300h3v-1.500M9 11.800v1.500h3.500" fill="none" stroke="#9c9c9c" stroke-width=".9"/></svg><span class="lb" style="left:181px;top:529px;max-width:89px">char<s>_</s>test<s>_</s>limited</span>
<u class="vl" style="left:48px;top:550px;height:22px"></u><u class="vl" style="left:68px;top:550px;height:22px"></u><u class="vl" style="left:128px;top:550px;height:22px"></u><u class="vl" style="left:148px;top:550px;height:5px"></u><u class="vl" style="left:148px;top:564px;height:8px"></u><u class="hl" style="left:154px;top:559px"></u><b class="tg cl" style="left:144px;top:555px"></b><svg class="ic" style="left:161px;top:551px" viewBox="0 0 16 16"><rect x="1.600" y=".600" width="13" height="14.800" fill="#ececec" stroke="#1e88e5" stroke-width="1.200"/><rect x="1.600" y=".600" width="13" height="3.800" fill="url(#gtb)"/><path d="M1 .6h14.200" stroke="#1e88e5" stroke-width="1.200"/><path d="M3.600 7.300h3v-1.500M9 5.800v1.500h3.500M3.600 10.300h3v-1.500M9 8.800v1.500h3.500M3.600 13.300h3v-1.500M9 11.800v1.500h3.500" fill="none" stroke="#9c9c9c" stroke-width=".9"/></svg><span class="lb" style="left:181px;top:551px;max-width:89px">constitution</span>
<i class="sel" style="left:158px;top:572px"></i><u class="vl" style="left:48px;top:572px;height:22px"></u><u class="vl" style="left:68px;top:572px;height:22px"></u><u class="vl" style="left:128px;top:572px;height:22px"></u><u class="vl" style="left:148px;top:572px;height:5px"></u><u class="vl" style="left:148px;top:586px;height:8px"></u><u class="hl" style="left:154px;top:581px"></u><b class="tg cl" style="left:144px;top:577px"></b><svg class="ic" style="left:161px;top:573px" viewBox="0 0 16 16"><rect x="1.600" y=".600" width="13" height="14.800" fill="#ececec" stroke="#1e88e5" stroke-width="1.200"/><rect x="1.600" y=".600" width="13" height="3.800" fill="url(#gtb)"/><path d="M1 .6h14.200" stroke="#1e88e5" stroke-width="1.200"/><path d="M3.600 7.300h3v-1.500M9 5.800v1.500h3.500M3.600 10.300h3v-1.500M9 8.800v1.500h3.500M3.600 13.300h3v-1.500M9 11.800v1.500h3.500" fill="none" stroke="#9c9c9c" stroke-width=".9"/></svg><span class="lb" style="left:181px;top:573px;max-width:89px">grundgesetz</span>
<u class="vl" style="left:48px;top:594px;height:22px"></u><u class="vl" style="left:68px;top:594px;height:22px"></u><u class="vl" style="left:128px;top:594px;height:22px"></u><u class="vl" style="left:148px;top:594px;height:5px"></u><u class="vl" style="left:148px;top:608px;height:8px"></u><u class="hl" style="left:154px;top:603px"></u><b class="tg cl" style="left:144px;top:599px"></b><svg class="ic" style="left:161px;top:595px" viewBox="0 0 16 16"><rect x="1.600" y=".600" width="13" height="14.800" fill="#ececec" stroke="#1e88e5" stroke-width="1.200"/><rect x="1.600" y=".600" width="13" height="3.800" fill="url(#gtb)"/><path d="M1 .6h14.200" stroke="#1e88e5" stroke-width="1.200"/><path d="M3.600 7.300h3v-1.500M9 5.800v1.500h3.500M3.600 10.300h3v-1.500M9 8.800v1.500h3.500M3.600 13.300h3v-1.500M9 11.800v1.500h3.500" fill="none" stroke="#9c9c9c" stroke-width=".9"/></svg><span class="lb" style="left:181px;top:595px;max-width:89px">text<s>_</s>test</span>
<u class="vl" style="left:48px;top:616px;height:22px"></u><u class="vl" style="left:68px;top:616px;height:22px"></u><u class="vl" style="left:128px;top:616px;height:22px"></u><u class="vl" style="left:148px;top:616px;height:5px"></u><u class="vl" style="left:148px;top:630px;height:8px"></u><u class="hl" style="left:154px;top:625px"></u><b class="tg cl" style="left:144px;top:621px"></b><svg class="ic" style="left:161px;top:617px" viewBox="0 0 16 16"><rect x="1.600" y=".600" width="13" height="14.800" fill="#ececec" stroke="#1e88e5" stroke-width="1.200"/><rect x="1.600" y=".600" width="13" height="3.800" fill="url(#gtb)"/><path d="M1 .6h14.200" stroke="#1e88e5" stroke-width="1.200"/><path d="M3.600 7.300h3v-1.500M9 5.800v1.500h3.500M3.600 10.300h3v-1.500M9 8.800v1.500h3.500M3.600 13.300h3v-1.500M9 11.800v1.500h3.500" fill="none" stroke="#9c9c9c" stroke-width=".9"/></svg><span class="lb" style="left:181px;top:617px;max-width:89px">varchar<s>_</s>test</span>
<u class="vl" style="left:48px;top:638px;height:22px"></u><u class="vl" style="left:68px;top:638px;height:22px"></u><u class="vl" style="left:128px;top:638px;height:22px"></u><u class="vl" style="left:148px;top:638px;height:5px"></u><u class="hl" style="left:154px;top:647px"></u><b class="tg cl" style="left:144px;top:643px"></b><svg class="ic" style="left:161px;top:639px" viewBox="0 0 16 16"><rect x="1.600" y=".600" width="13" height="14.800" fill="#ececec" stroke="#1e88e5" stroke-width="1.200"/><rect x="1.600" y=".600" width="13" height="3.800" fill="url(#gtb)"/><path d="M1 .6h14.200" stroke="#1e88e5" stroke-width="1.200"/><path d="M3.600 7.300h3v-1.500M9 5.800v1.500h3.500M3.600 10.300h3v-1.500M9 8.800v1.500h3.500M3.600 13.300h3v-1.500M9 11.800v1.500h3.500" fill="none" stroke="#9c9c9c" stroke-width=".9"/></svg><span class="lb" style="left:181px;top:639px;max-width:89px">varchar<s>_</s>test<s>_</s>limited</span>
<u class="vl" style="left:48px;top:660px;height:22px"></u><u class="vl" style="left:68px;top:660px;height:22px"></u><u class="vl" style="left:128px;top:660px;height:5px"></u><u class="vl" style="left:128px;top:674px;height:8px"></u><u class="hl" style="left:134px;top:669px"></u><b class="tg cl" style="left:124px;top:665px"></b><svg class="ic" style="left:141px;top:661px" viewBox="0 0 16 16"><g fill="url(#gtf)" stroke="#1b97a0" stroke-width="1" stroke-linejoin="round"><path d="M.8 1.600c0-.8.600-1 1.100-.5l6.500 6.300c.4.400.4.800 0 1.200l-5.300 5.200c-.6.500-1.300.3-1.400-.5z"/><path d="M3 1.800c0-.8.700-1 1.200-.5l7 6.700c.4.400.4.800 0 1.200l-5.900 5.600c-.6.500-1.400.2-1.500-.6z"/><path d="M5.600 2.400c0-.8.700-1 1.200-.5l8 7.200c.4.400.4.800 0 1.200l-6.800 6c-.6.500-1.400.2-1.500-.6z" transform="translate(0,-.6)"/></g></svg><span class="lb" style="left:161px;top:661px;max-width:109px">Trigger Functions</span>
<u class="vl" style="left:48px;top:682px;height:22px"></u><u class="vl" style="left:68px;top:682px;height:22px"></u><u class="vl" style="left:128px;top:682px;height:5px"></u><u class="vl" style="left:128px;top:696px;height:8px"></u><u class="hl" style="left:134px;top:691px"></u><b class="tg cl" style="left:124px;top:687px"></b><svg class="ic" style="left:141px;top:683px" viewBox="0 0 16 16"><g fill="url(#gty)" stroke="#4fd79a" stroke-width="1.100" stroke-linejoin="round"><rect x=".8" y=".8" width="9.800" height="10" rx=".8"/><rect x="2.800" y="2.800" width="9.800" height="10" rx=".8"/><rect x="5.200" y="5" width="10" height="10.200" rx=".8"/></g></svg><span class="lb" style="left:161px;top:683px;max-width:109px">Types</span>
<u class="vl" style="left:48px;top:704px;height:22px"></u><u class="vl" style="left:68px;top:704px;height:22px"></u><u class="vl" style="left:128px;top:704px;height:5px"></u><u class="hl" style="left:134px;top:713px"></u><b class="tg cl" style="left:124px;top:709px"></b><svg class="ic" style="left:141px;top:705px" viewBox="0 0 16 16"><g fill="#e4f5a0" stroke="#9ed000" stroke-width="1.300" stroke-linejoin="round"><rect x=".8" y=".8" width="10.500" height="10" rx="1"/><rect x="2.600" y="2.600" width="10.500" height="10" rx="1"/><rect x="4.700" y="4.600" width="11" height="10.800" rx="1" fill="#a9d800"/></g><rect x="6.800" y="6.700" width="6.800" height="6.600" fill="#a9d800" stroke="#fff" stroke-width="1.100"/><rect x="8.800" y="8.700" width="2.800" height="2.600" fill="#cdeb5a" stroke="#fff" stroke-width=".8"/></svg><span class="lb" style="left:161px;top:705px;max-width:109px">Views</span>
<u class="vl" style="left:48px;top:726px;height:22px"></u><u class="vl" style="left:68px;top:726px;height:5px"></u><u class="hl" style="left:74px;top:735px"></u><b class="tg cl" style="left:64px;top:731px"></b><svg class="ic" style="left:81px;top:727px" viewBox="0 0 16 16"><path d="M1.400 3.100C1.400 1.700 4.300.600 8 .600s6.600 1.100 6.600 2.500v9.800c0 1.400-2.900 2.500-6.600 2.500s-6.600-1.100-6.600-2.500z" fill="url(#gcy)" stroke="#b89a3a" stroke-width="1"/><ellipse cx="8" cy="3.200" rx="6" ry="2" fill="#fffbe0" stroke="#cdb95e" stroke-width=".5"/></svg><span class="lb" style="left:101px;top:727px;max-width:169px">postgres</span>
<u class="vl" style="left:48px;top:748px;height:5px"></u><u class="vl" style="left:48px;top:762px;height:8px"></u><u class="hl" style="left:54px;top:757px"></u><b class="tg cl" style="left:44px;top:753px"></b><svg class="ic" style="left:61px;top:749px" viewBox="0 0 16 16"><g stroke="#7c7c7c" stroke-width=".9"><path d="M.8 9c0-2 1-3 3.300-3s3.300 1 3.300 3z" fill="#c8e2f4"/><circle cx="4.100" cy="3.200" r="2.400" fill="#f6e1da"/><path d="M8.800 11c0-2 1-3 3.300-3s3.300 1 3.300 3z" fill="#c8e2f4"/><circle cx="12.100" cy="5.300" r="2.400" fill="#f6e1da"/><path d="M4.500 15.500c0-2.200 1.200-3.300 3.500-3.300s3.500 1.100 3.500 3.300z" fill="#c8e2f4"/><circle cx="8" cy="9.800" r="2.500" fill="#f6e1da"/></g></svg><span class="lb" style="left:81px;top:749px;max-width:189px">Login/Group Roles</span>
<u class="vl" style="left:48px;top:770px;height:5px"></u><u class="hl" style="left:54px;top:779px"></u><b class="tg cl" style="left:44px;top:775px"></b><svg class="ic" style="left:61px;top:771px" viewBox="0 0 16 16"><g fill="#fbef4a" stroke="#d4a810" stroke-width="1" stroke-linejoin="round"><path d="M.8 1.500c0-.5.300-.8.800-.8h3l1 1.200h3.200c.5 0 .8.300.8.800v5.500H.8z"/><path d="M3.800 4.500c0-.5.300-.8.800-.8h3l1 1.200h3.200c.5 0 .8.300.8.800v5.500H3.800z"/><path d="M7.200 8c0-.5.300-.8.800-.8h3l1 1.200h2.700c.5 0 .8.300.8.800v5c0 .5-.3.800-.8.800H8c-.5 0-.8-.3-.8-.8z"/></g></svg><span class="lb" style="left:81px;top:771px;max-width:189px">Tablespaces</span></div><!--/tree-->
<div id="vsplit" class="abs"></div>
<div id="vline" class="abs"></div>
<div id="right-head" class="abs">
<div class="tab" style="left:1px;width:96.5px"></div>
<div class="tab" style="left:100px;width:93px"></div>
<div class="tab" style="left:195.5px;width:56px"></div>
<div class="tab" style="left:254px;width:88.5px"></div>
<div class="tab" style="left:345px;width:113px"></div>
<div class="tab" style="left:460.5px;width:102px"></div>
<div class="tab act" style="left:564px;width:78px"></div>
<svg class="ti" style="left:7.500px;top:16.800px;width:14px;height:12px" viewBox="0 0 14 12" preserveAspectRatio="none"><path fill="#111" d="M7 0a7 7 0 0 0-6 10.600c.2.300.5.400.8.400h10.400c.3 0 .6-.100.800-.400A7 7 0 0 0 7 0z"/><g fill="#e9e9e9"><circle cx="2.800" cy="7.300" r=".8"/><circle cx="3.900" cy="4" r=".8"/><circle cx="7" cy="2.500" r=".7"/><circle cx="10.100" cy="4" r=".8"/><circle cx="11.200" cy="7.300" r=".8"/><path d="M6.500 8.800l1.200-5.300.5.100-.7 5.300z"/><circle cx="7" cy="8.900" r="1"/></g></svg>
<span class="tt" style="left:25.7px">Dashboard</span>
<svg class="ti" style="left:107px;top:15.5px;width:14.5px;height:13.5px" viewBox="0 0 15 14" preserveAspectRatio="none"><circle cx="4.8" cy="7" r="3.3" fill="#111"/><circle cx="4.8" cy="7" r="3.9" fill="none" stroke="#111" stroke-width="1.5" stroke-dasharray="1.532 1.532"/><circle cx="4.8" cy="7" r="1.5" fill="#e8e8e8"/><circle cx="11.9" cy="3.4" r="1.9" fill="#111"/><circle cx="11.9" cy="3.4" r="2.4" fill="none" stroke="#111" stroke-width="1.1" stroke-dasharray="1.257 1.257"/><circle cx="11.9" cy="3.4" r="0.8" fill="#e8e8e8"/><circle cx="11.9" cy="10.6" r="1.9" fill="#111"/><circle cx="11.9" cy="10.6" r="2.4" fill="none" stroke="#111" stroke-width="1.1" stroke-dasharray="1.257 1.257"/><circle cx="11.9" cy="10.6" r="0.8" fill="#e8e8e8"/></svg>
<span class="tt" style="left:125.7px">Properties</span>
<svg class="ti" style="left:202.7px;top:15px;width:11.5px;height:14px" viewBox="0 0 12 15" preserveAspectRatio="none"><path fill="none" stroke="#111" stroke-width="1.300" d="M.7.700h6.800l3.800 3.800v9.800H.7z"/><path fill="none" stroke="#111" stroke-width="1.100" d="M7.300.8v4h4M3 7h6M3 9.200h6M3 11.400h6"/></svg>
<span class="tt" style="left:218.4px">SQL</span>
<svg class="ti" style="left:261px;top:16.5px;width:14.8px;height:12px" viewBox="0 0 15 12" preserveAspectRatio="none"><path fill="none" stroke="#111" stroke-width="1.500" d="M.8 0v11.200H15"/><path fill="none" stroke="#111" stroke-width="1.800" d="M3 8.500l3.300-3.500 2.300 2.200L12.800 3"/><path fill="#111" d="M10 1.500h4.300v4.300z"/></svg>
<span class="tt" style="left:280.2px;letter-spacing:.16px">Statistics</span>
<svg class="ti" style="left:351.7px;top:15.5px;width:11.5px;height:13.5px" viewBox="0 0 12 14" preserveAspectRatio="none"><path fill="none" stroke="#111" stroke-width="1.150" stroke-linejoin="round" d="M3.600 1.800c0-1.500 2.200-1.500 2.200 0v3.700c.3-.6 1.600-.5 1.800.3.400-.5 1.600-.3 1.700.5.500-.4 1.700-.100 1.700.900v2.400c0 1-.7 1.500-.7 2.400H4.600c-.3-.8-1.600-1.600-2.400-2.700L.900 7.700c-.7-.9.500-2 1.400-1.200l1.300 1.200z"/><path fill="#111" d="M4.100 11.600h6.700v2.200H4.100z"/></svg>
<span class="tt" style="left:367.4px">Dependencies</span>
<svg class="ti" style="left:468px;top:15.5px;width:12px;height:13.5px" viewBox="0 0 12 14" preserveAspectRatio="none"><g transform="translate(0,14) scale(1,-1)"><path fill="none" stroke="#111" stroke-width="1.150" stroke-linejoin="round" d="M3.600 1.800c0-1.500 2.200-1.500 2.200 0v3.700c.3-.6 1.600-.5 1.800.3.400-.5 1.600-.3 1.700.5.500-.4 1.700-.100 1.700.900v2.400c0 1-.7 1.500-.7 2.400H4.600c-.3-.8-1.600-1.600-2.400-2.700L.900 7.700c-.7-.9.500-2 1.400-1.200l1.300 1.200z"/><path fill="#111" d="M4.100 11.600h6.700v2.200H4.100z"/></g></svg>
<span class="tt" style="left:483.7px">Dependents</span>
<svg class="ti" style="left:572px;top:15px;width:7px;height:13.5px" viewBox="0 0 8 15" preserveAspectRatio="none"><path fill="#111" d="M2.200 0h3.600L4.500 4.800l3.300-.8L3 15l1-7.200L.2 8.700z"/></svg>
<span class="tt act" style="left:586.5px">Query-1</span>
<div id="closebtn" class="abs"><svg class="abs" style="left:6px;top:6px;width:8.500px;height:8.500px" viewBox="0 0 10 10"><path stroke="#222" stroke-width="3.200" d="M1.300 1.300l7.400 7.400M8.700 1.300L1.300 8.700"/></svg></div>
</div>
<div id="toolbar" class="abs">
<div class="btn l" style="left:3px;width:38.3px"><svg style="left:10.9px;top:8px;width:15.3px;height:11.2px" viewBox="0 0 17 13" preserveAspectRatio="none"><path fill="none" stroke="#222" stroke-width="1.300" stroke-linejoin="round" d="M.700 11.500V1.600c0-.5.400-.9.900-.9h3.300l1.400 1.600h5.200c.5 0 .9.400.9.900v1.800M.8 11.800l2.600-5.900c.2-.5.500-.8 1-.8h11.300l-2.900 6.300c-.2.400-.5.700-1 .7H1.500c-.5 0-.8-.2-.7-.300z"/></svg></div>
<div class="btn m" style="left:41.3px;width:39px"><svg style="left:12.9px;top:7.8px;width:12.2px;height:12px" viewBox="0 0 14 14" preserveAspectRatio="none"><path fill="none" stroke="#222" stroke-width="1.300" stroke-linejoin="round" d="M.7.700h10l2.600 2.600v10H.7z"/><path fill="none" stroke="#222" stroke-width="1.300" d="M3.200.8v4h5.600v-4M3 13.200V8.500h8v4.700"/><path fill="#222" d="M6.200 1.500h1.700v2.400H6.200z"/></svg></div>
<div class="btn r" style="left:80.3px;width:18.7px"><div class="caret"></div></div>
<div class="btn l dis" style="left:105px;width:38.4px"><svg style="left:11px;top:7.3px;width:14px;height:12.9px" viewBox="0 0 14 13" preserveAspectRatio="none"><path fill="#d8d8d8" stroke="#6e6e6e" stroke-width="1.200" stroke-linejoin="round" d="M.7 3.200L3.200.7h5.600v9.600H.7z"/><path fill="none" stroke="#6e6e6e" stroke-width="1" d="M3.400.9v2.500H.9"/><path fill="#d8d8d8" stroke="#6e6e6e" stroke-width="1.200" stroke-linejoin="round" d="M5.200 5.700l2.500-2.500h5.600v9.100H5.200z"/><path fill="none" stroke="#6e6e6e" stroke-width="1" d="M7.900 3.400v2.500H5.400"/></svg></div>
<div class="btn r dis" style="left:143.4px;width:38.6px"><svg style="left:11.5px;top:6.8px;width:14px;height:13.4px" viewBox="0 0 16 16" preserveAspectRatio="none"><path fill="#6e6e6e" d="M0 1.500h3.500V.5h4v1H11v3H6.500v9.500H0z"/><path fill="#d4d4d4" stroke="#6e6e6e" stroke-width="1.200" stroke-linejoin="round" d="M7 5.500h5l3.300 3.300v6.500H7z"/><path fill="none" stroke="#6e6e6e" stroke-width="1.100" d="M11.800 5.700v3.500h3.400"/></svg></div>
<div class="btn s dis" style="left:188px;width:38.2px"><svg style="left:12px;top:7.4px;width:11.5px;height:12.6px" viewBox="0 0 13 15" preserveAspectRatio="none"><path fill="#6e6e6e" d="M0 2.500h4V1c0-.6.400-1 1-1h3c.6 0 1 .4 1 1v1.500h4V4H0zM5.200 1.200v1.300h2.600V1.200zM1.200 5h10.600v8.500c0 .8-.7 1.500-1.500 1.500H2.700c-.8 0-1.500-.7-1.500-1.500z"/><path stroke="#d4d4d4" stroke-width="1.100" d="M4 6.800v6M6.500 6.800v6M9 6.800v6"/></svg></div>
<div class="btn l dis" style="left:232.2px;width:38.1px"><svg style="left:11.8px;top:8.2px;width:12.5px;height:12.3px" viewBox="0 0 14 14" preserveAspectRatio="none"><path fill="#6e6e6e" d="M.3 0h13.400c.3 0 .4.300.2.500L8.500 6.300v7.200c0 .4-.4.600-.7.300l-2-1.800c-.2-.2-.3-.400-.3-.6V6.300L.1.500C-.1.300 0 0 .3 0z"/></svg></div>
<div class="btn r dis" style="left:270.3px;width:18.5px"><div class="caret"></div></div>
<div id="limit" class="abs">No limit<i></i></div>
<div class="btn l" style="left:388.3px;width:38px"><svg style="left:14.1px;top:7.2px;width:8.2px;height:13.6px" viewBox="0 0 8 15" preserveAspectRatio="none"><path fill="#222" d="M2.200 0h3.600L4.500 4.800l3.300-.8L3 15l1-7.200L.2 8.700z"/></svg></div>
<div class="btn r" style="left:426.3px;width:18.7px"><div class="caret"></div></div>
<div class="btn s dis" style="left:446.8px;width:38.2px"><svg style="left:12px;top:7.6px;width:12.5px;height:12.3px" viewBox="0 0 14 14" preserveAspectRatio="none"><rect width="14" height="14" fill="#6a6a6a"/></svg></div>
<div class="btn l" style="left:491px;width:38.6px"><svg style="left:10.3px;top:7.2px;width:15.3px;height:12px" viewBox="0 0 16 14" preserveAspectRatio="none"><path fill="none" stroke="#222" stroke-width="1.500" stroke-linejoin="round" d="M11.500 8.500v2.700c0 1.100-.9 2-2 2H2.800c-1.100 0-2-.9-2-2V4.500c0-1.100.9-2 2-2h6"/><path fill="#222" d="M6 7.500l6.500-6.500 2 2L8 9.500l-2.600.6zM13.200.4c.4-.4 1-.4 1.400 0l.8.800c.4.400.4 1 0 1.400l-.5.500-2.200-2.200z"/></svg></div>
<div class="btn r" style="left:529.6px;width:18.4px"><div class="caret"></div></div>
<div class="btn l" style="left:554px;width:38px"><svg style="left:11.6px;top:6.8px;width:13.6px;height:12.4px" viewBox="0 0 15 14" preserveAspectRatio="none"><path fill="#222" d="M5.500 0h4v4.500h3L7.500 9.300 2.500 4.500h3zM0 9.500h4.300l1.500 1.500c.9.900 2.500.900 3.400 0l1.500-1.500H15V14H0z"/><circle cx="12.600" cy="12" r=".7" fill="#fff"/></svg></div>
<div class="btn r" style="left:592px;width:18.8px"><div class="caret"></div></div>
</div>
<div id="bluebar" class="abs">datatypes on Shirley@pg</div>

<div id="editor" class="abs">
<div class="gut abs"></div>
<div class="selbg abs" style="top:3px;height:27px;width:152px"></div>
<div class="selbg abs" style="top:23px;height:27px;width:412px"></div>
<div class="selbg abs" style="top:43px;height:27px;width:572px"></div>
<div class="selbg abs" style="top:63px;height:27px;width:161.5px"></div>
<div class="selbg abs" style="top:82.7px;height:27.1px;width:707px"></div>
<div class="selbg abs" style="top:103px;height:32px;width:677px"></div>
<div class="selbg abs" style="top:127px;height:26.7px;width:700px"></div>
<div class="selbg abs" style="top:143px;height:26.6px;width:130px"></div>
<div class="ln abs" style="top:6px">1</div><pre class="cl abs" style="top:6px"><b class="k">SELECT</b> cntrycode,</pre>
<div class="ln abs" style="top:26px">2</div><pre class="cl abs" style="top:26px"><b class="k">COUNT</b>(<b class="k">*</b>) <b class="k">AS</b> numcust,<b class="k">SUM</b>(c<u>_</u>acctbal) <b class="k">AS</b> totacctbal</pre>
<div class="ln abs" style="top:46px">3</div><pre class="cl abs" style="top:46px"><b class="k">FROM</b>(<b class="k">SELECT</b> <b class="k">SUBSTRING</b>(c<u>_</u>phone <b class="k">FROM</b> <b class="n">1</b> for <b class="n">2</b>) <b class="k">AS</b> cntrycode, c<u>_</u>acctbal</pre>
<div class="ln abs" style="top:66px">4</div><pre class="cl abs" style="top:66px"><b class="k">FROM</b> tpch.<b class="v">customer</b></pre>
<div class="ln abs" style="top:86px">5</div><pre class="cl abs" style="top:86px"><b class="k">WHERE</b> <b class="k">SUBSTRING</b>(c<u>_</u>phone <b class="k">from</b> <b class="n">1</b> for <b class="n">2</b>) <b class="k">IN</b> (<i class="s">’13’</i>, <i class="s">’31’</i>, <i class="s">’23’</i>, <i class="s">’29’</i>, <i class="s">’30’</i>, <i class="s">’18’</i>, <i class="s">’17’</i>)</pre>
<div class="ln abs" style="top:106px">6</div><pre class="cl abs" style="top:106px"><b class="k">AND</b> c<u>_</u>acctbal <b class="k">&gt;</b> (<b class="k">SELECT</b> <b class="k">AVG</b>(c<u>_</u>acctbal)<b class="k">FROM</b> tpch.<b class="v">customer</b> <b class="k">WHERE</b> c<u>_</u>acctbal &gt; <b class="k">0.00</b></pre>
<div class="ln abs" style="top:126px">7</div><pre class="cl abs" style="top:126px"><b class="k">AND</b> <b class="k">SUBSTRING</b>(c<u>_</u>phone <b class="k">from</b> <b class="n">1</b> for <b class="n">2</b>) <b class="k">IN</b> (<i class="s">’13’</i>, <i class="s">’31’</i>, <i class="s">’23’</i>, <i class="s">’29’</i>, <i class="s">’30’</i>, <i class="s">’18’</i>, <i class="s">’17’</i>))</pre>
<div class="ln abs" style="top:146px">8</div><pre class="cl abs" style="top:146px"><b class="k">AND</b> not exists</pre>
<div class="ln abs" style="top:226px">9</div><pre class="cl abs" style="top:226px">(<b class="k">SELECT</b> <b class="k">*</b> <b class="k">FROM</b> tpch.<b class="v">orders</b></pre>
<div class="ln abs" style="top:246px">10</div><pre class="cl abs" style="top:246px"><b class="k">WHERE</b> o<u>_</u>custkey = c<u>_</u>custkey))</pre>
<div class="ln abs" style="top:266px">11</div><pre class="cl abs" style="top:266px"><b class="k">AS</b> custsale</pre>
<div class="ln abs" style="top:286px">12</div><pre class="cl abs" style="top:286px"><b class="k">GROUP BY</b></pre>
<div class="ln abs" style="top:306px">13</div><pre class="cl abs" style="top:306px">cntrycode</pre>
<div class="ln abs" style="top:326px">14</div><pre class="cl abs" style="top:326px"><b class="k">ORDER BY</b></pre>
<div class="ln abs" style="top:346px">15</div><pre class="cl abs" style="top:346px">cntrycode;</pre>
<div class="hint abs"><span class="h1">Autoformat SQL</span> <span class="h2">[Ctrl + Shift + F]</span><span class="h3">Don’t show again</span></div>
</div><!--/editor-->
<!--BOTTOM-->
<div id="hsplit" class="abs"></div>
<div id="bot-head" class="abs">
  <div class="btab act" style="left:.3px;width:86.700px"></div>
  <div class="btab" style="left:88.700px;width:57px"></div>
  <div class="btab" style="left:147.500px;width:73.300px"></div>
  <span class="bt act" style="left:7.500px">Data Output</span>
  <span class="bt" style="left:95.800px">Explain</span>
  <span class="bt" style="left:154.500px">Messages</span>
</div>
<div id="bot-body" class="abs"></div>
<!--/BOTTOM-->
<div id="edge-mark" class="abs" style="left:1438px;top:430px;width:2px;height:40px;background:#e6e6e6;border-top:1px solid #8a8a8a;border-bottom:1px solid #8a8a8a"></div>
</body>
</html>
